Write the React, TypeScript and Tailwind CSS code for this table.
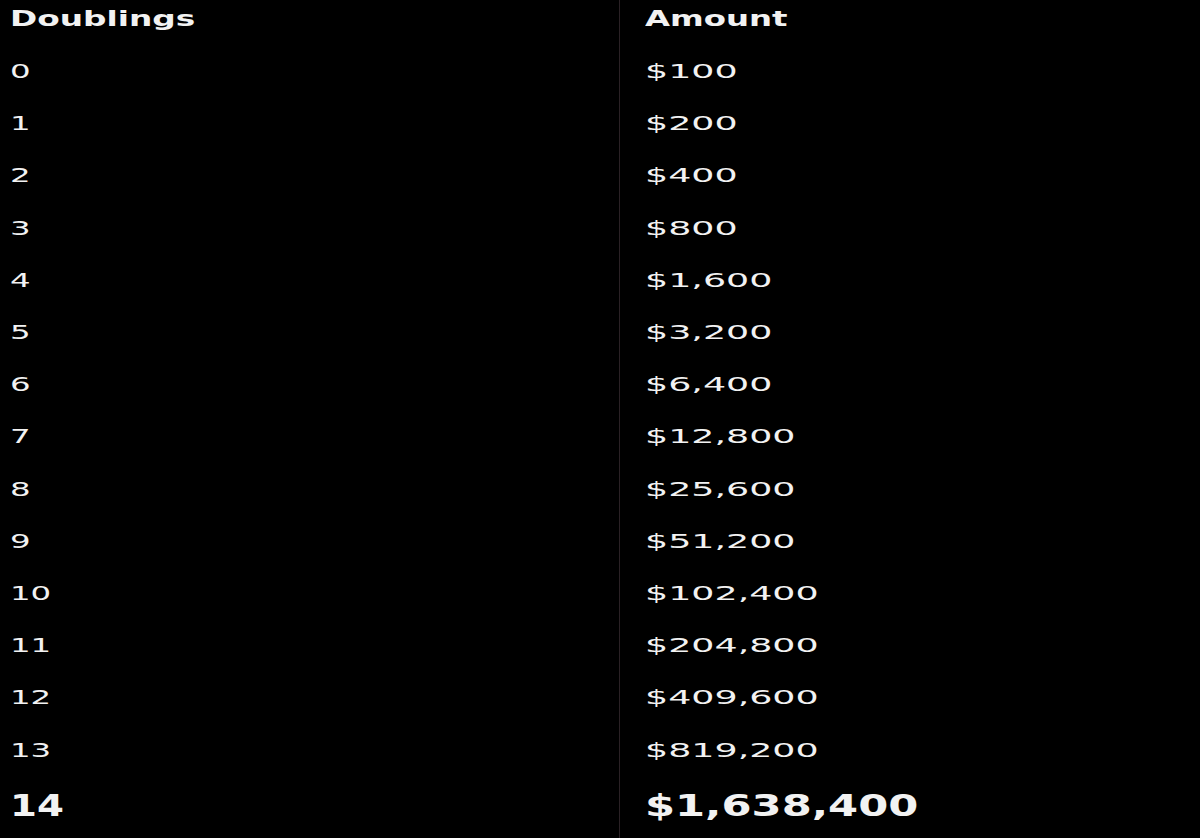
const rows = [
  { n: 0, amount: "$100" },
  { n: 1, amount: "$200" },
  { n: 2, amount: "$400" },
  { n: 3, amount: "$800" },
  { n: 4, amount: "$1,600" },
  { n: 5, amount: "$3,200" },
  { n: 6, amount: "$6,400" },
  { n: 7, amount: "$12,800" },
  { n: 8, amount: "$25,600" },
  { n: 9, amount: "$51,200" },
  { n: 10, amount: "$102,400" },
  { n: 11, amount: "$204,800" },
  { n: 12, amount: "$409,600" },
  { n: 13, amount: "$819,200" },
];

export default function App() {
  return (
    <div className="min-h-screen bg-black text-[#f2f2f2] font-['DejaVu_Sans',sans-serif]">
      <div className="grid grid-cols-[619px_1fr] min-h-screen">
        {/* left column */}
        <div className="flex flex-col pl-[10px]">
          <div className="h-[44px] pb-[6px] flex items-center">
            <span className="inline-block origin-left scale-x-[1.56] text-[21px] font-bold leading-none">
              Doublings
            </span>
          </div>
          {rows.map((r) => (
            <div key={r.n} className="h-[52.2px] flex items-center pt-[2px]">
              <span className="inline-block origin-left scale-x-[1.62] text-[20px] leading-none">
                {r.n}
              </span>
            </div>
          ))}
          <div className="h-[60px] flex items-center pt-[2px]">
            <span className="inline-block origin-left scale-x-[1.29] text-[30px] font-bold leading-none">
              14
            </span>
          </div>
        </div>

        {/* right column */}
        <div className="flex flex-col pl-[25px] border-l border-[#2a2125]">
          <div className="h-[44px] pb-[6px] flex items-center">
            <span className="inline-block origin-left scale-x-[1.54] text-[21px] font-bold leading-none">
              Amount
            </span>
          </div>
          {rows.map((r) => (
            <div key={r.n} className="h-[52.2px] flex items-center pt-[2px]">
              <span className="inline-block origin-left scale-x-[1.82] text-[20px] leading-none">
                {r.amount}
              </span>
            </div>
          ))}
          <div className="h-[60px] flex items-center pt-[2px]">
            <span className="inline-block origin-left scale-x-[1.44] text-[30px] font-bold leading-none">
              $1,638,400
            </span>
          </div>
        </div>
      </div>
    </div>
  );
}
